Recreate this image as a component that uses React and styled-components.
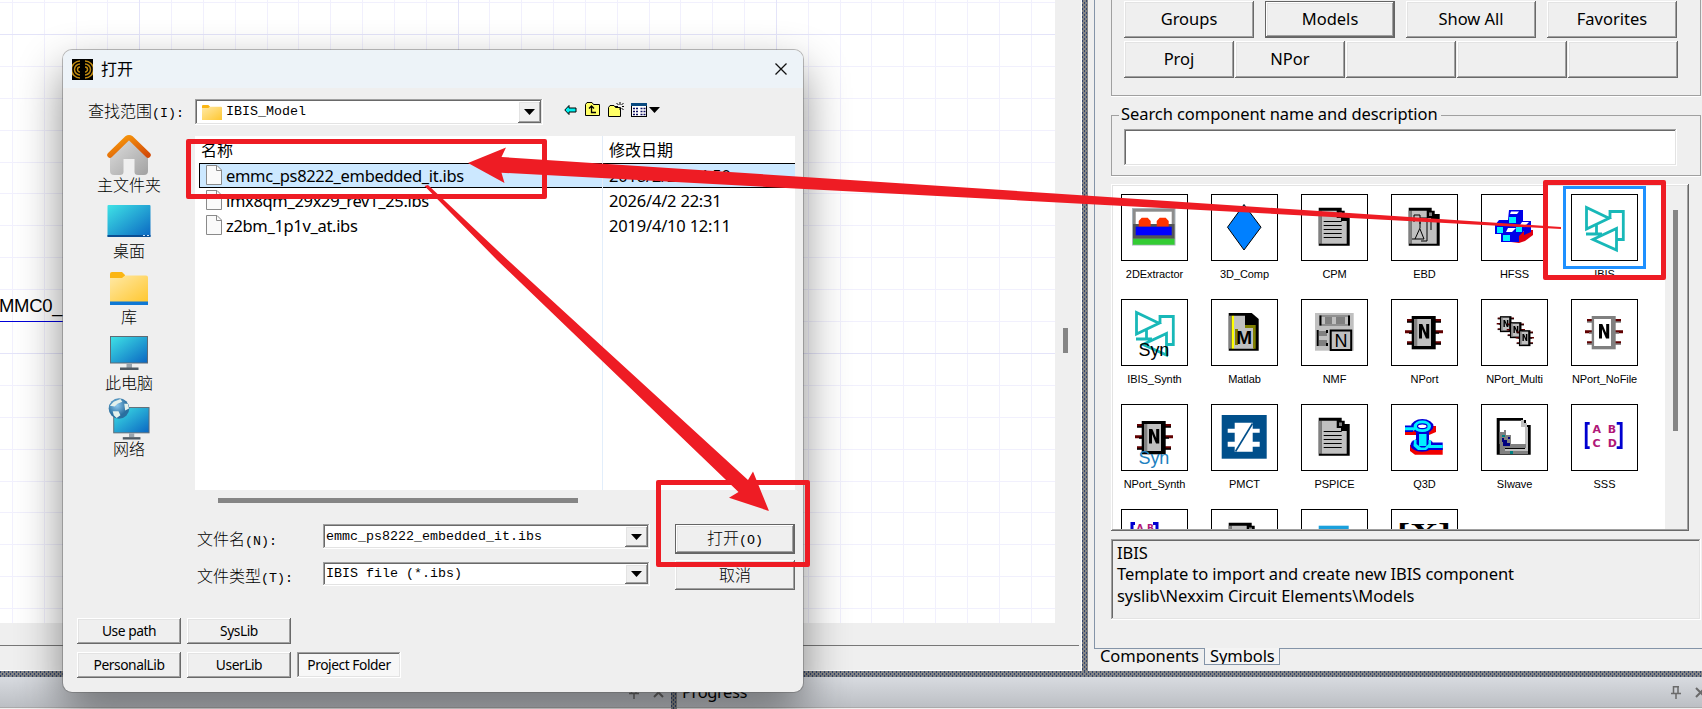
import styled, { createGlobalStyle } from 'styled-components';

const files = [
  { name: 'emmc_ps8222_embedded_it.ibs', date: '2018/2/27 14:50', selected: true },
  { name: 'imx8qm_29x29_rev1_25.ibs', date: '2026/4/2 22:31' },
  { name: 'z2bm_1p1v_at.ibs', date: '2019/4/10 12:11' },
];

const DocBase = () => (
  <>
    <path d="M17.7 13.7H40.7V16.7H43.7V20H48.7V51.7H17.7Z" fill="#000" />
    <path d="M17.7 16.7H20.7V49.7H17.7Z" fill="#808080" />
    <path d="M20.7 16.7H35.7V24H40V27H45.7V49.7H20.7Z" fill="#c0c0c0" />
    <path d="M38 18.5H41V22H38Z" fill="#808080" />
  </>
);

const DocIcon = () => (
  <g>
    <DocBase />
    <path d="M22.7 27.5H40.7M22.7 31.5H40.7M22.7 35.5H40.7M22.7 39.5H40.7M22.7 43.5H40.7" stroke="#000" />
  </g>
);

const ExtractorIcon = () => (
  <g>
    <rect x="11" y="14" width="43.5" height="37.5" fill="#a9b4bc" />
    <rect x="12" y="15" width="41.5" height="30" fill="#8c8c8c" />
    <rect x="14.7" y="17.7" width="36" height="13" fill="#fff" />
    <rect x="12" y="30" width="41.5" height="14.7" fill="#555" />
    <path d="M17.7 32.7V27L20.7 23.7H26.7L29.7 27V32.7ZM35.7 32.7V27L38.7 23.7H44.7L47.7 27V32.7Z" fill="#ff3300" />
    <rect x="14.7" y="32.7" width="36" height="8.6" fill="#0000ff" />
    <rect x="12" y="44.7" width="41.5" height="6" fill="#33cc33" />
  </g>
);

const DiamondIcon = () => (
  <path d="M33 10.5L50 33.2L33 56L16.5 33.2Z" fill="#0080ff" stroke="#000" />
);

const EbdIcon = () => (
  <g>
    <DocBase />
    <path d="M23 28V21H29V30M29 24H36V47H30M34 27H40V36M29 28V34L24 45H33L29 35M21 45H24" fill="none" stroke="#000" />
  </g>
);

const HfssIcon = () => (
  <g>
    <path d="M30 48L36 40L46 36H52V41L44 47L38 49Z" fill="#e00010" />
    <path d="M28 16L42 16L42 27L50 27V38L43 41V37L38 42V48H20V40H14V31L18 26H27Z" fill="#0000e8" />
    <path d="M30 17.5H38L36 20H29ZM27 34H35L31 38H25ZM41 28H48L45 31H39Z" fill="#fff" />
    <path d="M28 23H35V29H28ZM16 33H22V39H16ZM35 33H41V38H35ZM22 41H29V47H22Z" fill="#00f0ff" />
  </g>
);

const Gates = () => (
  <path
    d="M15.5 13.5V35L38 24.3ZM39 24.3V17.5H52.3V45.5H46.5M25.5 31V40M15 40H31M45.5 34.5V56L22 45.5Z"
    fill="none"
    stroke="#18b8b8"
    strokeWidth="2.8"
  />
);

const Syn = ({ y, color }) => (
  <text x="17.5" y={y} fontSize="18" fontFamily="Liberation Sans, sans-serif" fill={color}>Syn</text>
);

const SynthIcon = () => (
  <g>
    <Gates />
    <Syn y="56.5" color="#000" />
  </g>
);

const MatlabIcon = () => (
  <g>
    <path d="M17.7 14H40.7L47.7 20V51.7H17.7Z" fill="#000" />
    <rect x="17.7" y="16.7" width="3" height="33" fill="#808080" />
    <rect x="20.7" y="16.7" width="2.4" height="33" fill="#ffff00" />
    <path d="M23 16.7H34V26H43V49.7H23Z" fill="#c0c0c0" />
    <path d="M34 26H44.7V49.7H42V29H34ZM24 30H27V46H24Z" fill="#808000" />
    <text x="25.2" y="44.5" fontSize="19" fontWeight="900" fontFamily="Liberation Sans, sans-serif">M</text>
  </g>
);

const NmfIcon = () => (
  <g>
    <rect x="14" y="14" width="38.7" height="37.7" fill="#c0c0c0" />
    <path d="M19 17H48V26H19Z" fill="#c0c0c0" stroke="#808080" strokeWidth="1.5" />
    <path d="M24 18H31V25H24ZM35 18H44V25H35ZM18 32H26V37H18ZM18 41H26V47H18Z" fill="#808080" />
    <path d="M19.5 16.5V26.5M48 16.5V26.5M16.7 31V47M26 31V34M26 44V47" stroke="#000" strokeWidth="2" />
    <rect x="29.7" y="31.5" width="20.5" height="19.5" fill="#c0c0c0" stroke="#000" strokeWidth="2" />
    <text x="33.5" y="48" fontSize="18" fontFamily="Liberation Sans, sans-serif">N</text>
  </g>
);

const Chip = ({ body = '#000', face = '#c0c0c0', strip = '#808080' }) => (
  <g>
    <path d="M16 21.5H50M14 32.7H52M16 43.7H50" stroke="#600000" strokeWidth="3" />
    <path d="M16 23H50M18 34H48M16 45H50" stroke={body} strokeWidth="1.6" />
    <rect x="20.7" y="17" width="24" height="33.3" fill={body} />
    <rect x="23.3" y="20" width="16.7" height="27" fill={face} />
    <rect x="23.3" y="20" width="3" height="27" fill={strip} />
    <path d="M28 39.5V25H31.3L35.2 34V25H38.2V39.5H35L31 30V39.5Z" fill="#000" />
  </g>
);

const MultiIcon = () => (
  <g>
    <g transform="translate(9 9) scale(.48)"><Chip /></g>
    <g transform="translate(19 15) scale(.48)"><Chip /></g>
    <g transform="translate(28 23) scale(.48)"><Chip /></g>
  </g>
);

const NoFileIcon = () => <Chip body="#808080" face="#fff" strip="#fff" />;

const ChipSynthIcon = () => (
  <g>
    <Chip />
    <Syn y="59.5" color="#2080c0" />
  </g>
);

const PmctIcon = () => (
  <g>
    <rect x="10.7" y="11" width="45" height="43.7" fill="#004f8b" />
    <path d="M23.7 18.7H41.7V24.7H48.7V28.7H41.7V37.7H48.7V42.7H41.7V47.7H23.7V42.7H16.7V37.7H23.7V28.7H16.7V24.7H23.7Z" fill="#fff" />
    <path d="M24.5 47.5L41.5 19.5" stroke="#004f8b" strokeWidth="1.6" />
  </g>
);

const Q3dIcon = () => (
  <g>
    <path d="M14 27H26V31H14ZM38 22H45V28L38 31ZM19 41H30L40 44H51.7V50.7H24L19 47Z" fill="#f00000" />
    <path d="M14 21.5H22V28H14ZM25 28H38V42H25ZM38 38.5H51.7V46H38Z" fill="#0000d8" />
    <ellipse cx="31.3" cy="22.3" rx="11.2" ry="7.2" fill="#0000d8" />
    <ellipse cx="31" cy="41" rx="11.5" ry="6.8" fill="#0000d8" />
    <path d="M14 23.2H24V26.3H14ZM28 30H35.5V42H28ZM38 41H51.7V44H38Z" fill="#00f0ff" />
    <path d="M23 36H25.5V40L30 43.5H34L37.5 40V36H40V42L35 46H27L22.500 42Z" fill="#00f0ff" />
    <ellipse cx="31.3" cy="22.3" rx="7" ry="4" fill="#fff" stroke="#00f0ff" strokeWidth="3.5" />
    <ellipse cx="31.3" cy="22.3" rx="4.800" ry="2.400" fill="#fff" stroke="#0000d8" strokeWidth="1.2" />
  </g>
);

const SiwaveIcon = () => (
  <g>
    <path d="M15.7 14H42V16H45V21H49.7V50.7H15.7Z" fill="#000" />
    <path d="M18.7 16.7H40V22H46V40H18.7Z" fill="#fff" />
    <path d="M40 16H43V19H46V23H40ZM44 23H47V47H44ZM19 45H47V48H19Z" fill="#c0c0c0" />
    <path d="M18.7 28H23V26H25V31H30V40H45V44H24V47H47V50H18.7Z" fill="#808080" />
    <path d="M21 34H23V36H26V39H29V42H22V38H21ZM27 33H29V35H27Z" fill="#000080" />
    <path d="M21 31H24V33H21ZM29 47H32V50H29Z" fill="#008080" />
  </g>
);

const MatrixIcon = () => (
  <g>
    <path d="M18.7 19.3H15.2V43.6H18.7M45.7 19.3H50.2V43.6H45.7" fill="none" stroke="#0000d0" strokeWidth="2.8" />
    <g fill="#b01878" fontSize="11" fontWeight="700" fontFamily="DejaVu Sans, sans-serif">
      <text x="21.500" y="28.6">A</text>
      <text x="36.8" y="28.6">B</text>
      <text x="21.500" y="42.6">C</text>
      <text x="36.8" y="42.6">D</text>
    </g>
  </g>
);

const SmallMatrixIcon = () => (
  <g>
    <path d="M14 14.5H11V40M32 14.5H36V40" fill="none" stroke="#0000d0" strokeWidth="3" />
    <g fill="#b01878" fontSize="9" fontWeight="700" fontFamily="DejaVu Sans, sans-serif">
      <text x="15.500" y="21.500">A</text>
      <text x="26" y="21.500">B</text>
    </g>
  </g>
);

const BarIcon = () => <rect x="17.7" y="16.7" width="30" height="10" fill="#1aa0dc" />;

const BracketXIcon = () => (
  <text
    x="6"
    y="33"
    fontSize="27"
    fontWeight="700"
    fontFamily="Liberation Serif, serif"
    textLength="54"
    lengthAdjust="spacingAndGlyphs"
  >
    [X]
  </text>
);

const components = [
  { label: '2DExtractor', Icon: ExtractorIcon },
  { label: '3D_Comp', Icon: DiamondIcon },
  { label: 'CPM', Icon: DocIcon },
  { label: 'EBD', Icon: EbdIcon },
  { label: 'HFSS', Icon: HfssIcon },
  { label: 'IBIS', Icon: Gates, selected: true },
  { label: 'IBIS_Synth', Icon: SynthIcon },
  { label: 'Matlab', Icon: MatlabIcon },
  { label: 'NMF', Icon: NmfIcon },
  { label: 'NPort', Icon: Chip },
  { label: 'NPort_Multi', Icon: MultiIcon },
  { label: 'NPort_NoFile', Icon: NoFileIcon },
  { label: 'NPort_Synth', Icon: ChipSynthIcon },
  { label: 'PMCT', Icon: PmctIcon },
  { label: 'PSPICE', Icon: DocIcon },
  { label: 'Q3D', Icon: Q3dIcon },
  { label: 'SIwave', Icon: SiwaveIcon },
  { label: 'SSS', Icon: MatrixIcon },
  { label: '', Icon: SmallMatrixIcon },
  { label: '', Icon: DocIcon },
  { label: '', Icon: BarIcon },
  { label: '', Icon: BracketXIcon },
];

const FolderArt = () => (
  <>
    <path d="M0 2Q0 0 2 0H12L15 3V8H0Z" fill="#fbb614" />
    <path d="M0 6H12L15 3.5H36Q38 3.5 38 5.5V30H0Z" fill="url(#folderFill)" />
  </>
);

const HomeIcon = () => (
  <svg width="44" height="42" viewBox="0 0 44 42">
    <path d="M22 6L41 23V37Q41 41 37 41H31Q27.500 41 27.500 38V25H16.500V38Q16.500 41 13 41H7Q3 41 3 37V23Z" fill="url(#wall)" />
    <path d="M3 21L20 4.500Q22 3 24 4.500L41 21" fill="none" stroke="url(#roof)" strokeWidth="5.500" strokeLinecap="round" strokeLinejoin="round" />
  </svg>
);

const DesktopIcon = () => (
  <svg width="44" height="42" viewBox="0 0 44 42">
    <rect x=".5" y="5" width="43" height="32" rx="1" fill="url(#screen)" />
    <rect x=".5" y="35" width="43" height="2" fill="#0a4d92" />
    <path d="M36 35.500H38M40 35.500H42" stroke="#cfe6f8" />
  </svg>
);

const LibraryIcon = () => (
  <svg width="44" height="42" viewBox="0 0 44 42">
    <g transform="translate(3 6)">
      <FolderArt />
      <rect y="29.500" width="38" height="3.500" fill="#0f78d4" />
    </g>
  </svg>
);

const PcIcon = () => (
  <svg width="44" height="42" viewBox="0 0 44 42">
    <rect x="3.500" y="4.500" width="37" height="26.500" fill="url(#screen)" stroke="#5f6b75" />
    <path d="M19.500 31.500H25V36H19.500Z" fill="#9aa4ad" />
    <rect x="13" y="35.500" width="18.500" height="2.500" fill="#4f5a64" />
  </svg>
);

const NetworkIcon = () => (
  <svg width="44" height="44" viewBox="0 0 44 44">
    <rect x="6" y="10" width="37" height="26.500" fill="url(#screen)" stroke="#5f6b75" />
    <path d="M22 37H27.500V41H22Z" fill="#9aa4ad" />
    <rect x="15.500" y="41" width="18.500" height="2.500" fill="#4f5a64" />
    <circle cx="11.500" cy="11" r="10.800" fill="url(#globe)" />
    <path d="M6 4L13 1L15 4L10 6L7 9L2 8ZM17 6L21 6L22 11L18 13ZM5 14L11 14L13 18L9 21L6 18Z" fill="#e4f1ec" />
  </svg>
);

const places = [
  { label: '主文件夹', Icon: HomeIcon },
  { label: '桌面', Icon: DesktopIcon },
  { label: '库', Icon: LibraryIcon },
  { label: '此电脑', Icon: PcIcon },
  { label: '网络', Icon: NetworkIcon },
];

const Gradients = () => (
  <HiddenSvg>
    <defs>
      <linearGradient id="screen" x1="0" y1="0" x2="1" y2="1">
        <stop offset="0" stopColor="#3fe3e6" />
        <stop offset="1" stopColor="#0a66c2" />
      </linearGradient>
      <linearGradient id="folderFill" x1="0" y1="0" x2="1" y2="1">
        <stop offset="0" stopColor="#ffe9a6" />
        <stop offset="1" stopColor="#ffc730" />
      </linearGradient>
      <linearGradient id="roof" x1="0" y1="0" x2="1" y2="1">
        <stop offset="0" stopColor="#fba00c" />
        <stop offset="1" stopColor="#d24a08" />
      </linearGradient>
      <linearGradient id="wall" x1="0" y1="0" x2="1" y2="1">
        <stop offset="0" stopColor="#dedede" />
        <stop offset="1" stopColor="#a2a2a2" />
      </linearGradient>
      <radialGradient id="globe" cx=".4" cy=".35">
        <stop offset="0" stopColor="#8cc8ee" />
        <stop offset="1" stopColor="#2a6f9f" />
      </radialGradient>
    </defs>
  </HiddenSvg>
);

const FileIcon = () => (
  <svg width="16" height="20" viewBox="0 0 16 20">
    <path d="M.5.500H11L15.500 5V19.500H.5Z" fill="#fafafa" stroke="#8a8a8a" />
    <path d="M10.500.500V5.500H15.500" fill="none" stroke="#8a8a8a" />
  </svg>
);

const AppIcon = () => (
  <svg width="21" height="21" viewBox="0 0 21 21">
    <rect width="21" height="21" fill="#000" />
    <g fill="none" stroke="#c08a10" strokeWidth="1.500">
      <path d="M8 2A8.500 8.500 0 0 0 8 19M8 5A5.500 5.500 0 0 0 8 16M8 8A2.500 2.500 0 0 0 8 13" />
      <path d="M13 2A8.500 8.500 0 0 1 13 19M13 5A5.500 5.500 0 0 1 13 16M13 8A2.500 2.500 0 0 1 13 13" />
    </g>
  </svg>
);

const ToolIcons = () => (
  <svg width="98" height="18" viewBox="0 0 98 18">
    <path d="M.8 9L5 4.500V7H12V11H5V13.500Z" fill="#00f0f0" stroke="#000" />
    <path d="M21.500 3.500L23 1.500H28L29.500 3.500H35.500V14.500H21.500Z" fill="#ffff66" stroke="#000" />
    <path d="M25 7.500L27.500 5L30 7.500M27.500 6V11.500H32" fill="none" stroke="#000" strokeWidth="1.300" />
    <path d="M44.500 6.500L46 4.500H50L51.500 6.500H56.500V15.500H44.500Z" fill="#ffff66" stroke="#000" />
    <path d="M56 1V4M56 7V9M51 5.500H54M58 5.500H60M52.500 2L54.500 4M59.500 2L57.500 4M57.500 7L59.500 9" stroke="#000" />
    <rect x="67.500" y="2.500" width="15" height="13" fill="#fff" stroke="#000" />
    <rect x="67" y="2" width="16" height="3" fill="#0a4a80" />
    <path d="M69 7.500H74M76.500 7.500H81.500M69 10.500H74M76.500 10.500H81.500M69 13.500H74M76.500 13.500H81.500" stroke="#101060" strokeWidth="1.500" strokeDasharray="2 1" />
    <path d="M85 6H96L90.500 12Z" fill="#000" />
  </svg>
);

const CloseIcon = () => (
  <svg width="12" height="12" viewBox="0 0 12 12">
    <path d="M.5.500L11.500 11.500M11.500.500L.5 11.500" stroke="#111" strokeWidth="1.300" />
  </svg>
);

const PinIcon = () => (
  <svg width="10" height="13" viewBox="0 0 10 13">
    <path d="M2.500 0V7M2 .700H8M7 0V7M0 7.500H10M5 8V13" stroke="#6a6a6a" strokeWidth="1.500" fill="none" />
  </svg>
);

const CrossIcon = () => (
  <svg width="11" height="11" viewBox="0 0 11 11">
    <path d="M1 1L10 10M10 1L1 10" stroke="#6a6a6a" strokeWidth="2" />
  </svg>
);

const Arrow = () => (
  <DropButton>
    <svg width="11" height="6" viewBox="0 0 11 6"><path d="M0 0H11L5.500 6Z" /></svg>
  </DropButton>
);

const OpenDialog = () => (
  <Dialog>
    <TitleBar>
      <AppIcon />
      <span>打开</span>
      <CloseIcon />
    </TitleBar>
    <LookIn>
      <Song>查找范围<i>(I):</i></Song>
      <Combo $width={348} $height={26}>
        <svg width="20" height="15" viewBox="0 0 38 30" preserveAspectRatio="none"><FolderArt /></svg>
        <Mono>IBIS_Model</Mono>
        <Arrow />
      </Combo>
      <ToolIcons />
    </LookIn>
    <Browser>
      <Places>
        {places.map(({ label, Icon }) => (
          <Place key={label}>
            <Icon />
            <Song>{label}</Song>
          </Place>
        ))}
      </Places>
      <FileList>
        <ListHeader>
          <NameCell $header>名称</NameCell>
          <DateCell>修改日期</DateCell>
        </ListHeader>
        {files.map((file) => (
          <FileRow key={file.name} $selected={file.selected}>
            <NameCell><FileIcon />{file.name}</NameCell>
            <DateCell>{file.date}</DateCell>
          </FileRow>
        ))}
        <ListRest />
      </FileList>
    </Browser>
    <HScroll />
    <Form>
      <Fields>
        <Field $height={25}>
          <Song>文件名<i>(N):</i></Song>
          <Combo $width={327} $height={25}>
            <Mono>emmc_ps8222_embedded_it.ibs</Mono>
            <Arrow />
          </Combo>
        </Field>
        <Field $height={24}>
          <Song>文件类型<i>(T):</i></Song>
          <Combo $width={327} $height={24}>
            <Mono>IBIS file (*.ibs)</Mono>
            <Arrow />
          </Combo>
        </Field>
      </Fields>
      <Actions>
        <ActionButton $primary>打开<i>(O)</i></ActionButton>
        <ActionButton>取消</ActionButton>
      </Actions>
    </Form>
    <Shortcuts>
      <LibButton>Use path</LibButton>
      <LibButton>SysLib</LibButton>
      <span />
      <LibButton>PersonalLib</LibButton>
      <LibButton>UserLib</LibButton>
      <LibButton $active>Project Folder</LibButton>
    </Shortcuts>
  </Dialog>
);

const ComponentPanel = () => (
  <Panel>
    <PanelBody>
      <TopGroup>
        <ButtonRow $gap={11} $columns={4}>
          <PanelButton>Groups</PanelButton>
          <PanelButton $primary>Models</PanelButton>
          <PanelButton>Show All</PanelButton>
          <PanelButton>Favorites</PanelButton>
        </ButtonRow>
        <ButtonRow $gap={1} $columns={5}>
          <PanelButton>Proj</PanelButton>
          <PanelButton>NPor</PanelButton>
          <PanelButton />
          <PanelButton />
          <PanelButton />
        </ButtonRow>
      </TopGroup>
      <SearchGroup>
        <legend>Search component name and description</legend>
        <SearchBox />
      </SearchGroup>
      <Library>
        <LibraryGrid>
          {components.map(({ label, Icon, selected }, i) => (
            <Item key={i}>
              <ItemBox $selected={selected}>
                <svg width="67" height="67" viewBox="0 0 67 67"><Icon /></svg>
              </ItemBox>
              <ItemLabel>{label}</ItemLabel>
            </Item>
          ))}
        </LibraryGrid>
        <LibraryScroll />
      </Library>
      <Description>
        <div>IBIS</div>
        <div>Template to import and create new IBIS component</div>
        <div>syslib\Nexxim Circuit Elements\Models</div>
      </Description>
    </PanelBody>
    <Tabs>
      <Tab $wide>Components</Tab>
      <Tab $raised>Symbols</Tab>
      <TabFill />
    </Tabs>
  </Panel>
);

export default function App() {
  return (
    <>
      <GlobalStyle />
      <Gradients />
      <Screen>
        <Workspace>
          <Editor>
            <CanvasRow>
              <Canvas>
                <NetLabel>MMC0_</NetLabel>
              </Canvas>
              <VScroll />
            </CanvasRow>
            <CanvasFoot />
          </Editor>
          <VSplitter />
          <ComponentPanel />
        </Workspace>
        <HSplitter />
        <Docks>
          <Dock $width={671}>
            <span />
            <PinIcon />
            <CrossIcon />
          </Dock>
          <VSplitter />
          <Dock>
            <span>Progress</span>
            <PinIcon />
            <CrossIcon />
          </Dock>
        </Docks>
        <OpenDialog />
        <Callout $x={186} $y={139} $w={361} $h={60} />
        <Callout $x={656} $y={480} $w={154} $h={87} />
        <Callout $x={1543} $y={180} $w={123} $h={100} />
        <Arrows viewBox="0 0 1702 709">
          <path d="M468 163L506 147.500L501.500 157L1100 196.500L1561 227V229L1100 204.700L501.500 172.700L504.500 183Z" />
          <path d="M424.500 186L428 185L507.700 260L748 480L753 471.500L769 511L729 497.700L738.500 492L497 260Z" />
        </Arrows>
      </Screen>
    </>
  );
}

const raised = `
  inset -1px -1px #696969, inset 1px 1px #fff,
  inset -2px -2px #a0a0a0, inset 2px 2px #e3e3e3
`;

const sunken = `
  inset -1px -1px #fff, inset 1px 1px #a0a0a0,
  inset -2px -2px #e3e3e3, inset 2px 2px #696969
`;

const uiFont = `'Noto Sans', 'Noto Sans CJK SC', sans-serif`;

const GlobalStyle = createGlobalStyle`
  * {
    box-sizing: border-box;
  }
  body {
    margin: 0;
    overflow: hidden;
    color: #000;
    font-family: ${uiFont};
  }
  button {
    padding: 0;
    border: 0;
    color: #000;
    background: #efefef;
    font-family: inherit;
  }
`;

const HiddenSvg = styled.svg`
  position: absolute;
  width: 0;
  height: 0;
`;

const Screen = styled.div`
  position: relative;
  display: flex;
  flex-direction: column;
  width: 1702px;
  height: 709px;
  overflow: hidden;
  background: #efefef;
`;

const Workspace = styled.div`
  display: flex;
  height: 671px;
`;

const Editor = styled.div`
  display: flex;
  flex-direction: column;
  width: 1082px;
  border-right: 1px solid #fff;
  border-bottom: 1px solid #fff;
`;

const CanvasRow = styled.div`
  display: flex;
  height: 623px;
`;

const Canvas = styled.div`
  width: 1055px;
  background-color: #fff;
  background-image:
    repeating-linear-gradient(90deg, #e4e4f9 0 1px, transparent 1px 318.300px),
    repeating-linear-gradient(#e4e4f9 0 1px, transparent 1px 319px),
    repeating-linear-gradient(90deg, #f1f0fd 0 1px, transparent 1px 31.830px),
    repeating-linear-gradient(#f1f0fd 0 1px, transparent 1px 31.900px);
  background-size: 2000px 2000px;
  background-position: -179px 0, 0 -285px, -179px 0, 0 -285px;
`;

const NetLabel = styled.div`
  width: 90px;
  height: 26px;
  margin-top: 296px;
  text-indent: -1px;
  border-bottom: 1px solid #0000d8;
  font: 18.500px/20px 'Liberation Sans', sans-serif;
  letter-spacing: -0.300px;
`;

const VScroll = styled.div`
  width: 5px;
  height: 25px;
  margin: 328px 0 0 8px;
  background: #858585;
`;

const CanvasFoot = styled.div`
  width: 1079px;
  height: 23px;
  border-bottom: 1px solid #777;
`;

const dots = `
  conic-gradient(at 1px 2px, transparent 75%, #33466f 0) 0 0 / 4px 4px,
  conic-gradient(at 1px 2px, transparent 75%, #33466f 0) 2px 2px / 4px 4px,
  #868686
`;

const VSplitter = styled.div`
  flex: none;
  width: 6px;
  background: ${dots};
`;

const HSplitter = styled.div`
  height: 6px;
  background: ${dots};
`;

const Docks = styled.div`
  display: flex;
  height: 32px;
`;

const Dock = styled.div`
  display: flex;
  align-items: center;
  gap: 14px;
  flex: ${({ $width }) => ($width ? `0 0 ${$width}px` : 1)};
  height: 31px;
  padding: 0 0 0 5px;
  overflow: hidden;
  border-bottom: 1px solid #aaa;
  background: linear-gradient(#d8dbe0, #bcbfc4);
  font-size: 16.500px;
  line-height: 28px;
  letter-spacing: -0.400px;
  span {
    flex: 1;
  }
  svg {
    flex: none;
  }
  svg:last-child {
    margin-right: ${({ $width }) => ($width ? 7 : -4)}px;
  }
`;

/* component browser */

const Panel = styled.div`
  display: flex;
  flex-direction: column;
  flex: 1;
  min-width: 0;
  padding-left: 6px;
  letter-spacing: -0.070px;
`;

const PanelBody = styled.div`
  height: 648px;
  padding-left: 16px;
  border-left: 1px solid #8494a8;
  overflow: hidden;
`;

const TopGroup = styled.div`
  width: 590px;
  height: 96px;
  padding: 1px 0 0 12px;
  border: 1px solid #a0a0a0;
  border-top: 0;
  box-shadow: 0 1px #fff;
`;

const ButtonRow = styled.div`
  display: grid;
  grid-template-columns: repeat(${({ $columns }) => $columns}, 1fr);
  gap: ${({ $gap }) => $gap}px;
  width: ${({ $columns }) => ($columns === 4 ? 553 : 554)}px;
  margin-bottom: 3px;
`;

const PanelButton = styled.button`
  height: 37px;
  padding-bottom: 3px;
  font-size: 16.500px;
  border: ${({ $primary }) => ($primary ? '1px solid #646464' : 0)};
  box-shadow: ${raised};
`;

const SearchGroup = styled.fieldset`
  width: 590px;
  height: 73px;
  min-width: 0;
  margin: 7px 0 0;
  padding: 2px 12px 0;
  border: 1px solid #a0a0a0;
  box-shadow: 0 1px #fff;
  legend {
    height: 24px;
    margin-left: -5px;
    padding: 0 3px 0 2px;
    font-size: 16.500px;
    line-height: 21px;
    white-space: nowrap;
  }
`;

const SearchBox = styled.div`
  width: 553px;
  height: 37px;
  background: #fff;
  box-shadow: ${sunken};
`;

const Library = styled.div`
  display: flex;
  width: 578px;
  height: 347px;
  margin-top: 8px;
  padding: 2px;
  box-shadow: ${raised};
`;

const LibraryGrid = styled.div`
  display: grid;
  grid-template-columns: repeat(6, 67px);
  grid-auto-rows: 105px;
  align-content: start;
  column-gap: 23px;
  width: 552px;
  padding: 8px 0 0 8px;
  overflow: hidden;
  background: #fff;
`;

const Item = styled.div`
  display: flex;
  flex-direction: column;
  align-items: center;
`;

const ItemBox = styled.div`
  width: 67px;
  height: 67px;
  border: 1px solid #000;
  outline: ${({ $selected }) => ($selected ? '3px solid #1e90ff' : 'none')};
  outline-offset: 5px;
  svg {
    display: block;
    margin: -1px;
  }
`;

const ItemLabel = styled.div`
  margin-top: 6px;
  font: 11px/14px 'Liberation Sans', sans-serif;
  white-space: nowrap;
`;

const LibraryScroll = styled.div`
  width: 5px;
  height: 221px;
  margin: 24px 0 0 8px;
  background: #858585;
`;

const Description = styled.div`
  width: 590px;
  height: 81px;
  margin-top: 8px;
  padding: 3px 6px;
  box-shadow: ${sunken};
  font-size: 16.500px;
  line-height: 21.300px;
  white-space: nowrap;
`;

const Tabs = styled.div`
  display: flex;
  height: 17px;
`;

const Tab = styled.div`
  width: ${({ $wide }) => ($wide ? 110 : 76)}px;
  height: ${({ $raised }) => ($raised ? 17 : 15)}px;
  padding-left: ${({ $wide }) => ($wide ? 6 : 5)}px;
  overflow: hidden;
  border: ${({ $raised }) => ($raised ? '1px solid #8494a8' : 0)};
  border-top: ${({ $raised }) => ($raised ? 0 : '1px solid #8494a8')};
  background: ${({ $raised }) => ($raised ? '#f4f4f4' : 'none')};
  font-size: 16.500px;
  line-height: ${({ $raised }) => ($raised ? 16 : 14)}px;
`;

const TabFill = styled.div`
  flex: 1;
  border-top: 1px solid #8494a8;
`;

/* file dialog */

const Dialog = styled.div`
  position: absolute;
  top: 50px;
  left: 63px;
  width: 740px;
  height: 642px;
  overflow: hidden;
  border-radius: 9px;
  background: #efefef;
  box-shadow: 0 0 0 1px rgba(90, 90, 90, 0.400), 0 20px 46px rgba(0, 0, 0, 0.460);
`;

const TitleBar = styled.div`
  display: flex;
  align-items: center;
  height: 38px;
  padding: 0 16px 0 9px;
  background: #edf3f8;
  font-size: 16px;
  span {
    flex: 1;
    margin: -2px 0 0 8px;
  }
`;

const Song = styled.span`
  font: 300 16px/18px 'Noto Sans CJK SC', sans-serif;
  white-space: nowrap;
  i {
    font: 13.330px/1 'Liberation Mono', monospace;
  }
`;

const Mono = styled.span`
  flex: 1;
  font: 13.330px/18px 'Liberation Mono', monospace;
  white-space: pre;
`;

const LookIn = styled.div`
  display: flex;
  align-items: center;
  height: 48px;
  padding-left: 25px;
  ${Song} {
    width: 107px;
    margin-top: -3px;
  }
  > svg {
    margin: -5px 0 0 21px;
  }
`;

const Combo = styled.div`
  display: flex;
  align-items: center;
  flex: none;
  width: ${({ $width }) => $width}px;
  height: ${({ $height }) => $height}px;
  padding: 2px 2px 2px 3px;
  background: #fff;
  box-shadow: ${sunken};
  svg + ${Mono} {
    margin-left: 4px;
  }
  > svg {
    margin-left: 4px;
  }
`;

const DropButton = styled.span`
  display: grid;
  place-items: center;
  align-self: stretch;
  width: 23px;
  background: #efefef;
  box-shadow: ${raised};
`;

const Browser = styled.div`
  display: flex;
  height: 354px;
`;

const Places = styled.div`
  width: 132px;
  margin-top: -2px;
`;

const Place = styled.div`
  display: flex;
  flex-direction: column;
  align-items: center;
  height: 66px;
  svg {
    flex: none;
    height: 42px;
    overflow: visible;
  }
  ${Song} {
    margin-top: -1px;
  }
`;

const FileList = styled.div`
  display: flex;
  flex-direction: column;
  width: 600px;
  background: #fff;
  font-size: 16.500px;
`;

const NameCell = styled.div`
  display: flex;
  align-items: center;
  width: 408px;
  padding: 0 0 1px ${({ $header }) => ($header ? 6 : 11)}px;
  border-right: 1px solid #e2ecf8;
  letter-spacing: ${({ $header }) => ($header ? 0 : -0.330)}px;
  white-space: nowrap;
  svg {
    margin-right: 4px;
  }
`;

const DateCell = styled.div`
  display: flex;
  align-items: center;
  padding: 0 0 1px 6px;
  letter-spacing: -0.200px;
  white-space: nowrap;
`;

const ListHeader = styled.div`
  display: flex;
  height: 27px;
  font-size: 16px;
  ${DateCell} {
    letter-spacing: 0;
  }
`;

const FileRow = styled.div`
  display: flex;
  height: 25px;
  margin-left: 4px;
  background: ${({ $selected }) => ($selected ? '#cce8ff' : 'none')};
  box-shadow: ${({ $selected }) => ($selected ? 'inset 1px 1px #000, inset 0 -1px #000' : 'none')};
  ${NameCell} {
    width: 404px;
    padding-left: 7px;
  }
`;

const ListRest = styled.div`
  flex: 1;
  width: 408px;
  border-right: 1px solid #e2eefb;
`;

const HScroll = styled.div`
  width: 360px;
  height: 5px;
  margin: 8px 0 21px 155px;
  background: #858585;
`;

const Form = styled.div`
  display: flex;
  height: 66px;
  padding-left: 134px;
`;

const Fields = styled.div`
  display: flex;
  flex-direction: column;
  gap: 13px;
  width: 478px;
`;

const Field = styled.div`
  display: flex;
  align-items: center;
  height: ${({ $height }) => $height}px;
  ${Song} {
    width: 126px;
    margin-top: 4px;
  }
`;

const Actions = styled.div`
  display: flex;
  flex-direction: column;
  gap: 6px;
`;

const ActionButton = styled.button`
  width: 120px;
  height: 30px;
  padding-bottom: 3px;
  border: ${({ $primary }) => ($primary ? '1px solid #646464' : 0)};
  box-shadow: ${raised};
  font: 300 16px/18px 'Noto Sans CJK SC', sans-serif;
  i {
    font: 13.330px/1 'Liberation Mono', monospace;
  }
`;

const Shortcuts = styled.div`
  display: grid;
  grid-template-columns: repeat(3, 104px);
  gap: 8px 6px;
  padding: 28px 0 0 14px;
`;

const LibButton = styled.button`
  height: 26px;
  padding-bottom: 2px;
  background: ${({ $active }) => ($active ? '#f7f7f7' : '#efefef')};
  box-shadow: ${({ $active }) => ($active ? sunken : raised)};
  font-size: 13.800px;
  letter-spacing: -0.450px;
`;

/* red marks over the windows */

const Callout = styled.div`
  position: absolute;
  left: ${({ $x }) => $x}px;
  top: ${({ $y }) => $y}px;
  width: ${({ $w }) => $w}px;
  height: ${({ $h }) => $h}px;
  border: 5px solid #ee1c24;
  border-radius: 2px;
`;

const Arrows = styled.svg`
  position: absolute;
  inset: 0;
  fill: #ee1c24;
`;
